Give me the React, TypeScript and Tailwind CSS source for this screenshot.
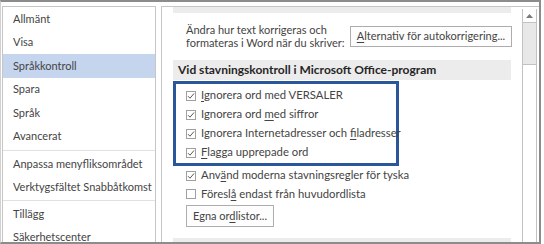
import React from "react";

const font = { fontFamily: 'Lato, "Noto Sans", sans-serif' };

function U({ children }: { children: React.ReactNode }) {
  return <span className="underline underline-offset-[2px] decoration-[1px]">{children}</span>;
}

function Check({ checked }: { checked: boolean }) {
  return (
    <span className="w-[10px] h-[10px] border border-[#a0a0a0] bg-white flex items-center justify-center shrink-0">
      {checked && (
        <svg width="8" height="8" viewBox="0 0 8 8">
          <path d="M1 4.2 L3 6.2 L7 1.5" fill="none" stroke="#595959" strokeWidth="1" />
        </svg>
      )}
    </span>
  );
}

function Row({ checked, children, h = "h-[19px]" }: { checked: boolean; children: React.ReactNode; h?: string }) {
  return (
    <div className={`${h} flex items-center gap-[5px] whitespace-nowrap text-[11.3px]`}>
      <Check checked={checked} />
      <span>{children}</span>
    </div>
  );
}

const navTop = ["Allmänt", "Visa", "Språkkontroll", "Spara", "Språk", "Avancerat"];

function Nav({ children, active = false }: { children: React.ReactNode; active?: boolean }) {
  return (
    <div className={`h-[23.5px] shrink-0 flex items-center pl-[10px] whitespace-nowrap ${active ? "bg-[#c5d5ee]" : ""}`}>
      {children}
    </div>
  );
}

export default function App() {
  return (
    <div className="w-[544px] h-[244px] bg-white overflow-hidden text-[11px] text-[#444444]" style={font}>
      <div className="w-[541px] h-[244px] border-t-2 border-b-2 border-r-2 border-[#8c8c8c] border-l border-l-[#d0d0d0] flex pt-[4px] pl-[1px]">
        {/* Sidebar */}
        <div className="w-[154px] h-full border border-b-0 border-[#c6c6c6] flex flex-col shrink-0 overflow-hidden">
          {navTop.map((n) => (
            <Nav key={n} active={n === "Språkkontroll"}>{n}</Nav>
          ))}
          <div className="h-[4px] shrink-0 flex items-center"><div className="h-px w-full bg-[#e1e1e1]" /></div>
          <Nav>Anpassa menyfliksområdet</Nav>
          <Nav>Verktygsfältet Snabbåtkomst</Nav>
          <div className="h-[3px] shrink-0 flex items-center"><div className="h-px w-full bg-[#e1e1e1]" /></div>
          <Nav>Tillägg</Nav>
          <Nav>Säkerhetscenter</Nav>
        </div>

        <div className="w-[5px] shrink-0" />

        {/* Content panel */}
        <div className="flex-1 h-full border-l border-t border-[#c6c6c6] flex overflow-hidden">
          <div className="w-[360px] shrink-0 flex flex-col">
            <div className="h-[6px] mx-[11px] bg-[#ececec] shrink-0" />
            <div className="mt-[10px] pl-[24px] pr-[10px] flex items-center justify-between shrink-0">
              <div className="leading-[13px] whitespace-nowrap">
                <div>Ändra hur text korrigeras och</div>
                <div>formateras i Word när du skriver:</div>
              </div>
              <div className="h-[21px] w-[162px] shrink-0 border border-[#adadad] bg-[#fdfdfd] flex items-center justify-center whitespace-nowrap">
                <span><U>A</U>lternativ för autokorrigering...</span>
              </div>
            </div>
            <div className="mt-[11px] h-[20px] mx-[11px] bg-[#ececec] flex items-center pl-[5px] font-bold text-[12px] text-[#262626] whitespace-nowrap shrink-0">
              Vid stavningskontroll i Microsoft Office-program
            </div>
            <div className="mt-[1px] ml-[11px] w-[226px] border-[3px] border-[#2b579a] pt-[2px] pb-[1px] pl-[10px] shrink-0">
              <Row checked><U>I</U>gnorera ord med VERSALER</Row>
              <Row checked>Ignorera ord <U>m</U>ed siffror</Row>
              <Row checked>Ignorera Internetadresser och <U>f</U>iladresser</Row>
              <Row checked><U>F</U>lagga upprepade ord</Row>
            </div>
            <div className="pl-[24px] shrink-0">
              <Row checked>Anv<U>ä</U>nd moderna stavningsregler för tyska</Row>
              <Row checked={false} h="h-[18px]">Föresl<U>å</U> endast från huvudordlista</Row>
            </div>
            <div className="mt-[2px] ml-[24px] h-[22px] w-[88px] border border-[#adadad] bg-[#fdfdfd] flex items-center justify-center whitespace-nowrap shrink-0">
              <span>Egna or<U>d</U>listor...</span>
            </div>
            <div className="mt-[11px] h-[10px] mx-[11px] bg-[#ececec] shrink-0" />
          </div>

          {/* Scrollbar */}
          <div className="w-[15px] shrink-0 mt-[2px] border-l border-r border-[#c2c2c2] bg-[#e8e8e8] flex flex-col">
            <div className="h-[14px] bg-white border-b border-[#c2c2c2] flex items-center justify-center">
              <svg width="7" height="4" viewBox="0 0 7 4"><path d="M0 4 L3.5 0 L7 4 Z" fill="#7a7a7a" /></svg>
            </div>
            <div className="h-[41px]" />
            <div className="flex-1 bg-white border-t border-[#c2c2c2]" />
          </div>
          <div className="w-[2px] shrink-0" />
        </div>
      </div>
    </div>
  );
}
